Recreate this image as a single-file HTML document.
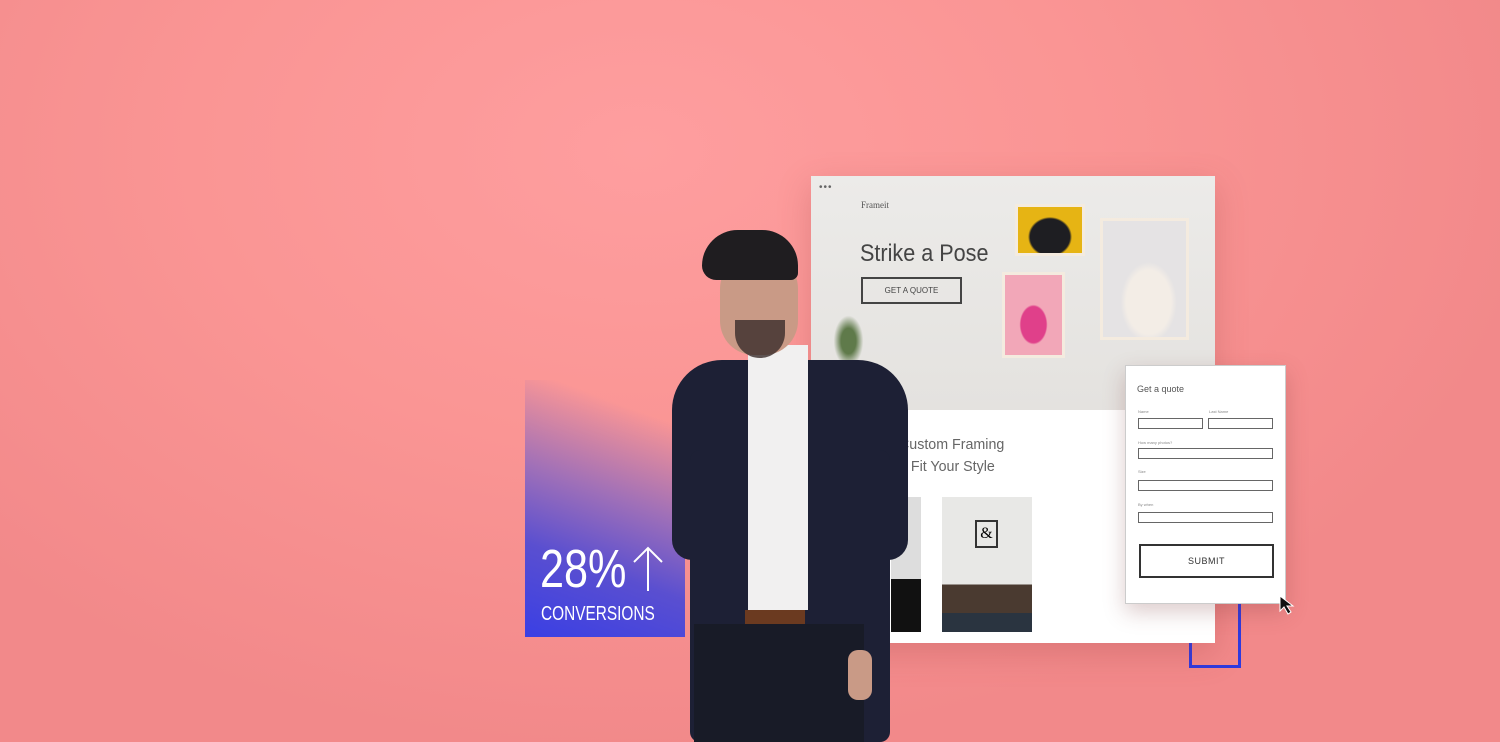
<!DOCTYPE html>
<html><head><style>
*{margin:0;padding:0;box-sizing:border-box}
body{width:1500px;height:742px;overflow:hidden;position:relative;font-family:"Liberation Sans",sans-serif;
background:radial-gradient(ellipse 900px 600px at 640px 150px,#fe9e9f 0%,#fa9594 50%,#f2898a 100%);}
.a{position:absolute}
.lbl{position:absolute;font-size:4px;color:#888}
.in{position:absolute;border:1px solid #666;height:11px;background:#fff}
</style></head><body>
<div class="a" style="left:525px;top:380px;width:160px;height:257px;background:linear-gradient(20deg,#3a3fe4 0%,#5a4fd0 30%,#a070b8 55%,rgba(250,150,150,0) 85%)"></div>
<div class="a" style="left:540px;top:542px;color:#fff;font-size:54px;font-weight:300;line-height:1;transform:scaleX(.8);transform-origin:left">28%</div>
<svg class="a" style="left:630px;top:545px" width="36" height="48"><path d="M18 46V3M4 17L18 3L32 17" stroke="#fff" stroke-width="2" fill="none"/></svg>
<div class="a" style="left:541px;top:603px;color:#fff;font-size:20px;transform:scaleX(.77);transform-origin:left">CONVERSIONS</div>
<div class="a" style="left:1189px;top:600px;width:52px;height:68px;border-right:3px solid #2e3ae0;border-bottom:3px solid #2e3ae0"></div>
<div class="a" style="left:1189px;top:640px;width:3px;height:28px;background:#2e3ae0"></div>
<div class="a" style="left:811px;top:176px;width:404px;height:467px;background:#fff;box-shadow:0 10px 30px rgba(150,60,60,.25)">
 <div class="a" style="left:0;top:0;width:404px;height:234px;background:linear-gradient(#ecebe9,#e4e2df)"></div>
 <div class="a" style="left:8px;top:6px;font-size:10px;color:#666;letter-spacing:1px">•••</div>
 <div class="a" style="left:50px;top:24px;font-family:'Liberation Serif',serif;font-size:9px;color:#555">Frameit</div>
 <div class="a" style="left:49px;top:64px;font-size:24px;color:#444;transform:scaleX(.9);transform-origin:left">Strike a Pose</div>
 <div class="a" style="left:50px;top:101px;width:101px;height:27px;border:2px solid #444;font-size:8px;color:#444;text-align:center;line-height:23px">GET A QUOTE</div>
 <div class="a" style="left:204px;top:28px;width:70px;height:52px;background:#f4ebdf;padding:3px"><div style="width:100%;height:100%;background:radial-gradient(ellipse 22px 20px at 50% 65%,#1e1e22 90%,#e6b414 100%)"></div></div>
 <div class="a" style="left:191px;top:96px;width:63px;height:86px;background:#f4ebdf;padding:3px"><div style="width:100%;height:100%;background:radial-gradient(ellipse 14px 20px at 50% 62%,#e0408a 90%,#f2a7b8 100%)"></div></div>
 <div class="a" style="left:289px;top:42px;width:89px;height:122px;background:#f4ebdf;padding:3px"><div style="width:100%;height:100%;background:radial-gradient(ellipse 28px 40px at 55% 70%,#f3ede6 80%,#e5e3e4 100%)"></div></div>
 <div class="a" style="left:20px;top:135px;width:35px;height:50px;background:radial-gradient(ellipse at 50% 60%,#5f7a4a 30%,transparent 60%)"></div>
 <div class="a" style="left:88px;top:258px;font-size:15px;color:#666;line-height:22px;transform:scaleX(.95);transform-origin:left">Custom Framing<br>o Fit Your Style</div>
 <div class="a" style="left:80px;top:321px;width:30px;height:135px;background:#ddd"><div style="position:absolute;left:0;top:82px;width:30px;height:53px;background:#111"></div></div>
 <div class="a" style="left:131px;top:321px;width:90px;height:135px;background:linear-gradient(#e8e8e6 65%,#4a3a30 65%,#4a3a30 86%,#2a3440 86%)"><div style="position:absolute;left:33px;top:23px;width:23px;height:28px;border:2px solid #333;font-family:'Liberation Serif',serif;font-size:16px;text-align:center;line-height:24px">&amp;</div></div>
</div>
<!-- person -->
<div class="a" style="left:672px;top:360px;width:236px;height:200px;background:#1d2035;border-radius:50px 50px 20px 20px"></div>
<div class="a" style="left:690px;top:450px;width:200px;height:292px;background:#1d2035;border-radius:10px"></div>
<div class="a" style="left:748px;top:345px;width:60px;height:265px;background:#f1f0f0"></div>
<div class="a" style="left:745px;top:610px;width:60px;height:14px;background:#6b3a20"></div>
<div class="a" style="left:694px;top:624px;width:170px;height:118px;background:#181b27"></div>
<div class="a" style="left:720px;top:250px;width:78px;height:105px;background:#c99a86;border-radius:40px 40px 35px 35px"></div>
<div class="a" style="left:702px;top:230px;width:96px;height:50px;background:#1f1d20;border-radius:50px 50px 10px 20px"></div>
<div class="a" style="left:735px;top:320px;width:50px;height:38px;background:#3a2c2a;border-radius:0 0 25px 25px;opacity:.8"></div>
<div class="a" style="left:848px;top:650px;width:24px;height:50px;background:#c99a86;border-radius:10px"></div>
<div class="a" style="left:1125px;top:365px;width:161px;height:239px;background:#fff;border:1px solid #ccc;box-shadow:0 8px 20px rgba(120,50,50,.25)">
 <div class="a" style="left:11px;top:18px;font-size:9px;color:#555">Get a quote</div>
 <div class="lbl" style="left:12px;top:43px">Name</div><div class="lbl" style="left:83px;top:43px">Last Name</div>
 <div class="in" style="left:12px;top:52px;width:65px"></div><div class="in" style="left:82px;top:52px;width:65px"></div>
 <div class="lbl" style="left:12px;top:74px">How many photos?</div><div class="in" style="left:12px;top:82px;width:135px"></div>
 <div class="lbl" style="left:12px;top:103px">Size</div><div class="in" style="left:12px;top:114px;width:135px"></div>
 <div class="lbl" style="left:12px;top:136px">By when</div><div class="in" style="left:12px;top:146px;width:135px"></div>
 <div class="a" style="left:13px;top:178px;width:135px;height:34px;border:2px solid #333;font-size:9px;text-align:center;line-height:30px;color:#333;letter-spacing:.5px">SUBMIT</div>
</div>
<svg class="a" style="left:1278px;top:594px" width="18" height="22"><path d="M2 2L2 17L6 13L10 20L13 18L9 12L15 12Z" fill="#111" stroke="#fff" stroke-width="1"/></svg>
</body></html>
